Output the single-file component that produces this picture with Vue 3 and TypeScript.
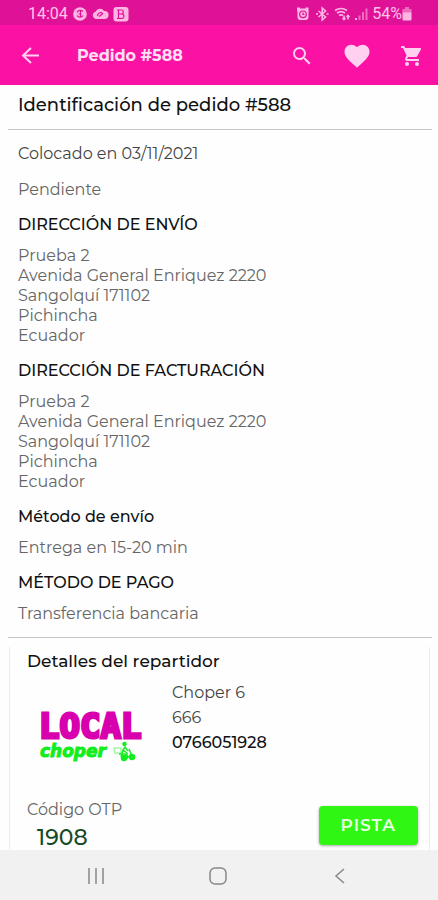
<script setup lang="ts">
interface Section {
  title: string
  lines: string[]
}

const address: string[] = [
  'Prueba 2',
  'Avenida General Enriquez 2220',
  'Sangolquí 171102',
  'Pichincha',
  'Ecuador',
]

const sections: Section[] = [
  { title: 'DIRECCIÓN DE ENVÍO', lines: address },
  { title: 'DIRECCIÓN DE FACTURACIÓN', lines: address },
  { title: 'Método de envío', lines: ['Entrega en 15-20 min'] },
  { title: 'MÉTODO DE PAGO', lines: ['Transferencia bancaria'] },
]
</script>

<template>
  <div class="screen">
    <div class="status">
      <span class="clock">14:04</span>
      <svg class="status-left" viewBox="0 0 56 16" aria-hidden="true">
        <circle cx="7" cy="8" r="6.8" />
        <path class="cut" d="M4 6.5a3.6 3.6 0 0 1 6-1M10 9.5a3.6 3.6 0 0 1-6 0M7.5 5v6M5.5 8h3" />
        <path d="M23 13a3.7 3.7 0 0 1-.5-7.2 4.800 4.800 0 0 1 8.600-.8 4 4 0 0 1 .9 8z" />
        <path class="cut" d="M24.500 10a3 3 0 0 1 5-2.500M26 10.500l4-3" />
        <rect x="40.500" y="1" width="15" height="14.500" rx="3" />
        <path class="cut" d="M45.500 4v8.500h3.200a2.200 2.200 0 0 0 0-4.500h-3.200M45.500 4h2.800a2 2 0 0 1 0 4M44 4h2M44 12.500h2" />
      </svg>
      <svg class="status-right" viewBox="0 0 72 16" aria-hidden="true">
        <path d="M1 1.500h3v2L1 5.500zM9.500 1.500h3v4l-3-2z" />
        <rect x="1.500" y="2.500" width="11" height="11.500" rx="3" />
        <circle class="cut" cx="7" cy="8.300" r="3.300" />
        <path class="cut" d="M7 6.500v2h1.500" />
        <path class="line" d="M22.500 5l7 6-3.300 3V2l3.300 3-7 6M20 8h2M30.500 8h2" />
        <path class="line" d="M39 4.500q6-4 12 0M41 7q4-2.700 8 0M43 9.500q2-1.300 4 0M48 9.500v4M46.500 12l1.500 1.500 1.500-1.500M52 13.500v-4M50.500 11l1.500-1.500 1.500 1.500" />
        <path d="M59 12h2v2h-2z" />
        <path class="dim" d="M62.500 9.500h2V14h-2zM66 6h2v8h-2zM69.500 2.500h2V14h-2z" />
      </svg>
      <span class="percent">54%</span>
      <svg class="battery" viewBox="0 0 10 14" aria-hidden="true">
        <path class="dim" d="M3 0h4v2h2.500v4H.5V2H3z" />
        <path d="M.5 5.500h9v7a1 1 0 0 1-1 1h-7a1 1 0 0 1-1-1z" />
      </svg>
    </div>

    <header class="bar">
      <button class="icon back" type="button" aria-label="Atrás">
        <svg viewBox="0 0 24 24"><path class="arrow" d="M20 11.500H4M12 4l-8 7.500 8 7.500" /></svg>
      </button>
      <h1>Pedido #588</h1>
      <button class="icon" type="button" aria-label="Buscar">
        <svg viewBox="0 0 24 24">
          <path d="M15.500 14h-.79l-.28-.27A6.470 6.470 0 0 0 16 9.500 6.500 6.500 0 1 0 9.500 16c1.610 0 3.090-.59 4.230-1.570l.27.28v.79l5 4.990L20.490 19zm-6 0a4.500 4.500 0 1 1 0-9 4.500 4.500 0 0 1 0 9z" />
        </svg>
      </button>
      <button class="icon heart" type="button" aria-label="Favoritos">
        <svg viewBox="0 0 24 24">
          <path d="M12 21.350l-1.450-1.320C5.400 15.360 2 12.280 2 8.500 2 5.420 4.420 3 7.500 3c1.740 0 3.410.81 4.500 2.090C13.090 3.810 14.760 3 16.500 3 19.580 3 22 5.420 22 8.500c0 3.780-3.400 6.860-8.550 11.540z" />
        </svg>
      </button>
      <button class="icon" type="button" aria-label="Carrito">
        <svg viewBox="0 0 24 24">
          <path d="M7 18c-1.100 0-1.990.9-1.990 2S5.900 22 7 22s2-.9 2-2-.9-2-2-2zM1 2v2h2l3.600 7.590-1.350 2.450C4.520 15.370 5.480 17 7 17h12v-2H7.420c-.14 0-.25-.11-.25-.25l.93-1.750h7.450c.75 0 1.410-.41 1.750-1.030l3.580-6.490A1 1 0 0 0 20 4H5.210l-.94-2zM17 18c-1.100 0-1.990.9-1.990 2s.89 2 1.990 2 2-.9 2-2-.9-2-2-2z" />
        </svg>
      </button>
    </header>

    <main>
      <h2 class="order">Identificación de pedido #588</h2>
      <div class="details">
        <p class="placed">Colocado en 03/11/2021</p>
        <p class="state">Pendiente</p>
        <section v-for="section in sections" :key="section.title">
          <h3>{{ section.title }}</h3>
          <p v-for="line in section.lines" :key="line">{{ line }}</p>
        </section>
      </div>

      <section class="card">
        <h2>Detalles del repartidor</h2>
        <div class="driver">
          <svg class="logo" viewBox="0 0 106 66" role="img" aria-label="Local Choper">
            <text class="local" x="1" y="38">LOCAL</text>
            <text class="choper" x="2" y="57">choper</text>
            <g class="moto" transform="translate(-1 6)">
              <path class="box" d="M77 42h7v5h-6z" />
              <path d="M84 51l2-7 2-3 3 4M86 44l4 3v6M92 43l3 7M82 48h6l3 3 4-2" />
              <circle cx="87.500" cy="38" r="1.500" />
              <circle cx="87" cy="52" r="2.500" />
              <circle cx="95" cy="51" r="2.500" />
            </g>
          </svg>
          <div class="contact">
            <span>Choper 6</span>
            <span>666</span>
            <a href="tel:0766051928">0766051928</a>
          </div>
        </div>
        <div class="otp">
          <div>
            <p>Código OTP</p>
            <p class="code">1908</p>
          </div>
          <button class="track" type="button">PISTA</button>
        </div>
      </section>
    </main>

    <nav>
      <button type="button" aria-label="Recientes">
        <svg viewBox="0 0 20 20"><path d="M3 2v16M10 2v16M17 2v16" /></svg>
      </button>
      <button type="button" aria-label="Inicio">
        <svg viewBox="0 0 20 20"><rect x="2" y="2" width="16" height="16" rx="5" /></svg>
      </button>
      <button type="button" aria-label="Volver">
        <svg viewBox="0 0 20 20"><path d="M14 3l-8 7 8 7" /></svg>
      </button>
    </nav>
  </div>
</template>

<style>
body {
  margin: 0;
  background: #fefefe;
}
</style>

<style scoped>
.screen {
  display: flex;
  flex-direction: column;
  min-height: 100vh;
  font-family: Montserrat, Inter, sans-serif;
  font-size: 16px;
  line-height: 20px;
  color: #666;
}

h1,
h2,
h3,
p {
  margin: 0;
  font-weight: 400;
}

button {
  padding: 0;
  border: 0;
  background: none;
  font-family: inherit;
  cursor: pointer;
}

svg {
  display: block;
}

.status {
  display: flex;
  align-items: center;
  height: 25px;
  padding: 2px 26px 0 28px;
  box-sizing: border-box;
  background: #df1297;
  color: #ffc3ea;
  fill: #ffb5e4;
  font-family: Roboto, sans-serif;
}

.status-left {
  width: 56px;
  height: 16px;
  margin-left: 5px;
}

.status-right {
  width: 72px;
  height: 16px;
  margin-left: auto;
}

.percent {
  margin-left: 4px;
  font-size: 16px;
}

.battery {
  width: 10px;
  height: 14px;
}

.cut {
  fill: none;
  stroke: #df1297;
  stroke-width: 1.2;
}

.line {
  fill: none;
  stroke: #ffb5e4;
  stroke-width: 1.6;
}

.dim {
  fill: #f06cbf;
}

.bar {
  display: flex;
  align-items: center;
  height: 60px;
  padding: 2px 14px 0 19px;
  box-sizing: border-box;
  background: #fb12a5;
  color: #ffe0f4;
}

.bar h1 {
  flex: 1;
  margin-left: 34px;
  font-size: 16px;
  font-weight: 700;
}

.icon {
  width: 24px;
  height: 24px;
  fill: #ffd0ef;
}

.icon + .icon {
  margin-left: 30px;
}

.bar .heart {
  width: 30px;
  height: 30px;
  margin-left: 28px;
}

.bar .heart + .icon {
  margin-left: 28px;
}

.arrow {
  fill: none;
  stroke: #ffd0ef;
  stroke-width: 2;
}

main {
  display: flex;
  flex: 1;
  flex-direction: column;
  padding: 0 6px 0 8px;
}

.order {
  padding: 8px 10px 12px;
  border-bottom: 1px solid #c4c4c4;
  font-size: 18px;
  line-height: 24px;
  font-weight: 500;
  color: #111;
}

.details {
  padding: 14px 10px 13px;
  border-bottom: 1px solid #c4c4c4;
}

.placed {
  color: #444;
}

.state {
  margin-top: 16px;
}

.details section {
  margin-top: 15px;
}

.details h3 {
  margin-bottom: 11px;
  font-size: 16px;
  font-weight: 500;
  color: #111;
}

.card {
  flex: 1;
  margin: 9px 2px 0 1px;
  padding: 4px 11px 0 17px;
  border: solid #ececec;
  border-width: 0 1px;
}

.card h2 {
  font-size: 17px;
  font-weight: 500;
  color: #111;
}

.driver {
  display: flex;
  gap: 28px;
  margin-top: 9px;
}

.logo {
  width: 106px;
  height: 66px;
  margin: 20px 0 0 11px;
}

.local {
  fill: #d800ae;
  stroke: #d800ae;
  stroke-width: 3;
  font: 700 34px "DejaVu Sans Mono", monospace;
}

.choper {
  fill: #12ed20;
  stroke: #12ed20;
  font: italic 700 17px "DejaVu Sans", sans-serif;
}

.moto {
  fill: #12ed20;
  stroke: #12ed20;
  stroke-width: 1.5;
}

.moto path {
  fill: none;
}

.moto .box {
  stroke: #a0f5a5;
}

.contact {
  display: flex;
  flex-direction: column;
  line-height: 25px;
  color: #444;
}

.contact a {
  color: #111;
  font-weight: 500;
  text-decoration: none;
}

.otp {
  display: flex;
  align-items: center;
  justify-content: space-between;
  margin-top: 34px;
}

.code {
  padding: 6px 0 0 10px;
  font-size: 22px;
  line-height: 24px;
  font-weight: 500;
  color: #174a26;
}

.track {
  padding: 0 22px;
  border-radius: 4px;
  background: #2ff713;
  box-shadow: 0 1px 3px #0005;
  color: #e8ffe4;
  font-size: 17px;
  line-height: 39px;
  font-weight: 600;
  letter-spacing: 1px;
}

nav {
  display: flex;
  align-items: center;
  justify-content: center;
  gap: 102px;
  height: 50px;
  padding: 2px 2px 0 0;
  box-sizing: border-box;
  background: #f1f1f1;
}

nav svg {
  width: 20px;
  height: 20px;
  fill: none;
  stroke: #888;
  stroke-width: 1.5;
}
</style>
